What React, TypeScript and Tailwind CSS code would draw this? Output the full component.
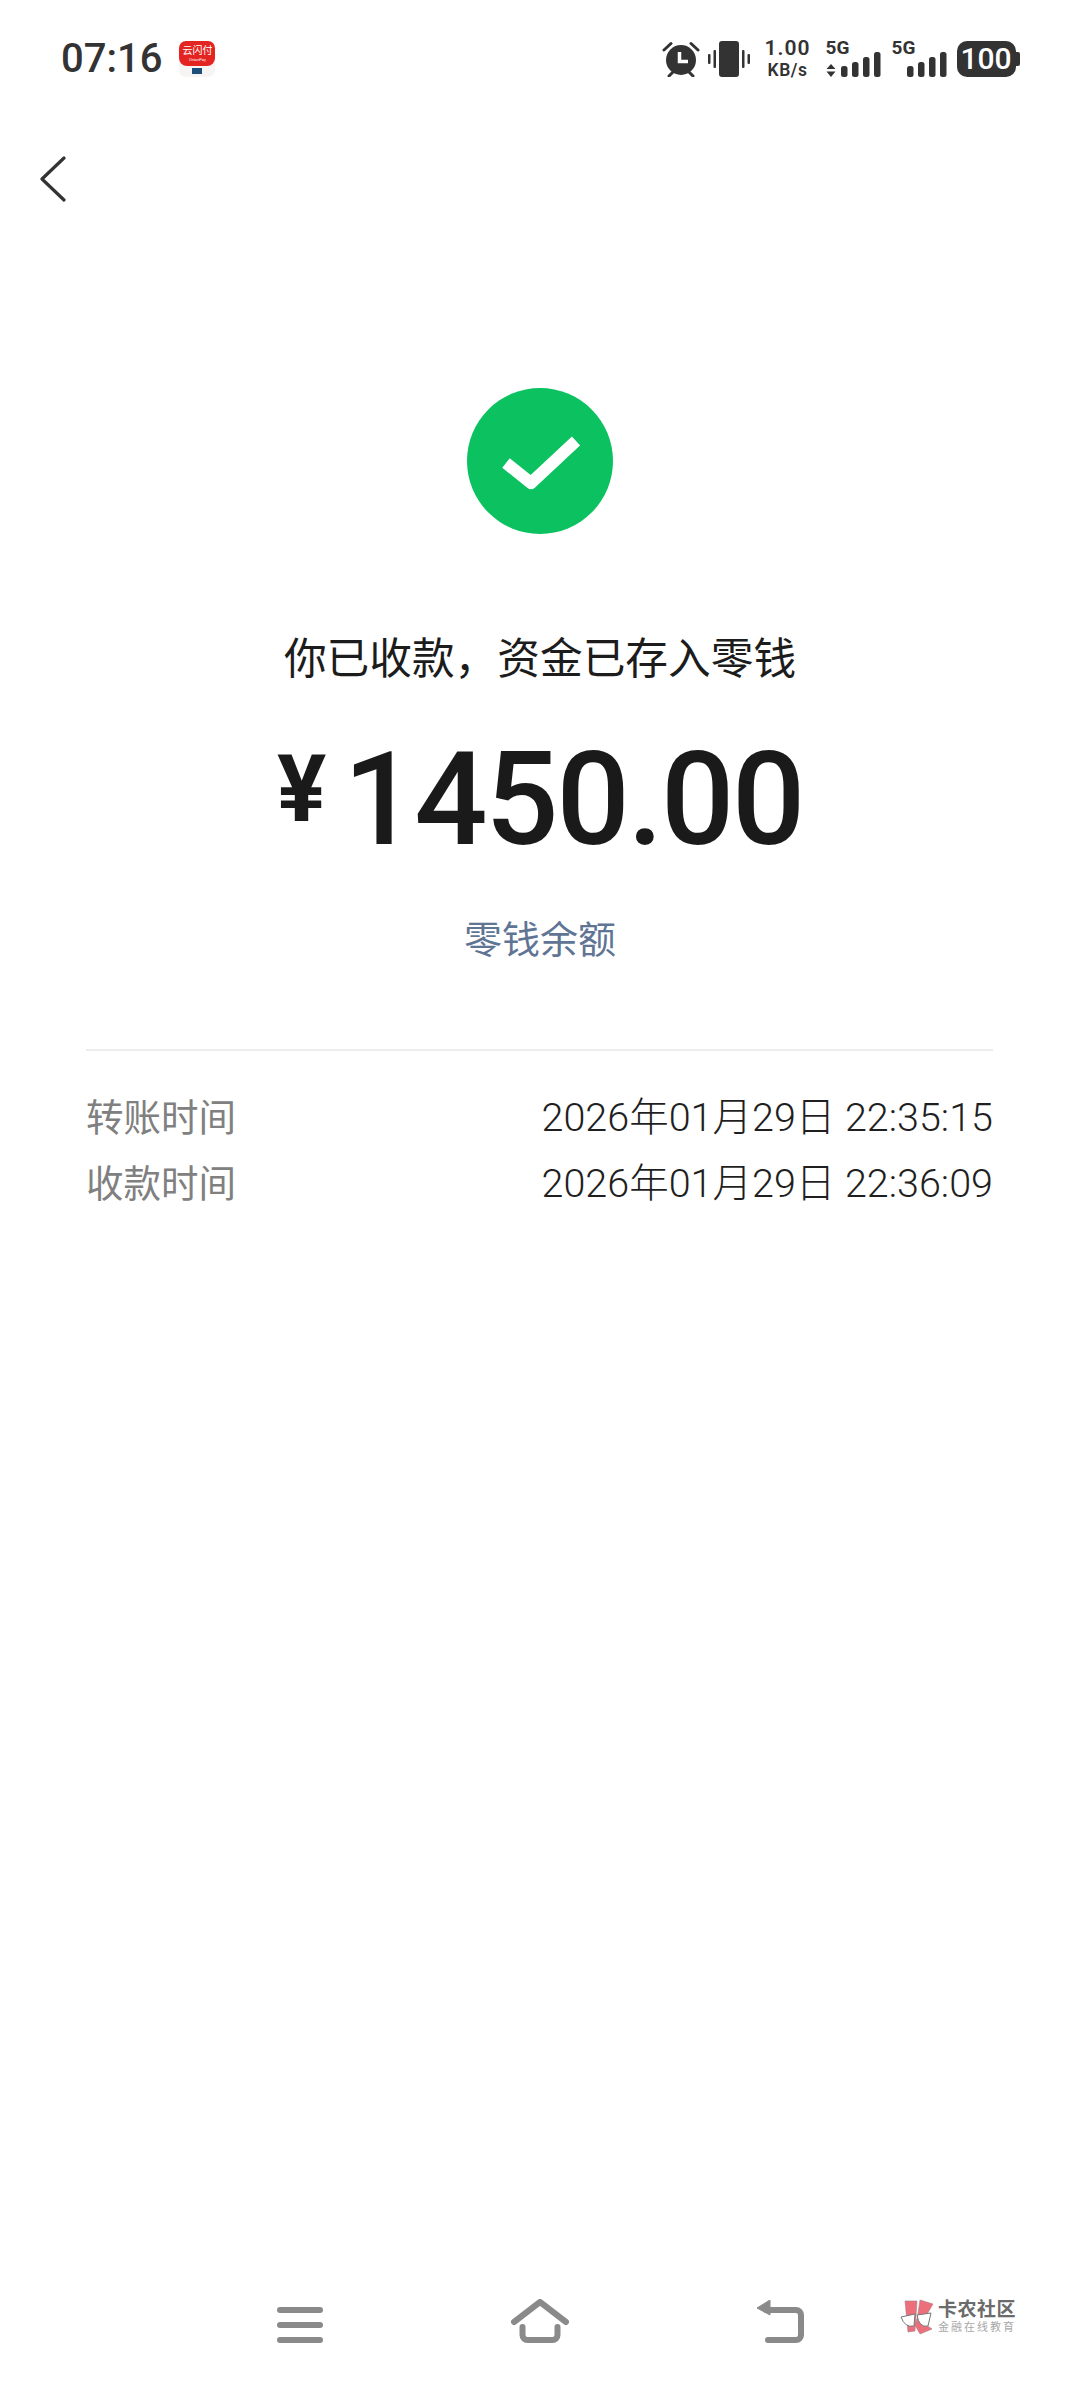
import React from 'react';

const CJK = "font-['Roboto','Noto_Sans_CJK_SC',sans-serif]";

const AlarmIcon = () => (
  <svg width="38" height="36" viewBox="0 0 38 36" fill="none">
    <circle cx="19" cy="19" r="15" fill="#333" />
    <path d="M2 9 9 2.5M36 9 29 2.5M7 35l4-4M31 35l-4-4" stroke="#333" strokeWidth="3" strokeLinecap="round" />
    <path d="M17.5 11v9.5H26" stroke="#fff" strokeWidth="3.5" />
  </svg>
);

const VibrateIcon = () => (
  <svg width="42" height="36" viewBox="0 0 42 36" fill="#333">
    <rect x="11" y="0" width="20" height="36" rx="3" />
    <rect x="0" y="13" width="2.5" height="10" rx="1" />
    <rect x="5.5" y="9" width="2.5" height="18" rx="1" />
    <rect x="34" y="9" width="2.5" height="18" rx="1" />
    <rect x="39.5" y="13" width="2.5" height="10" rx="1" />
  </svg>
);

// four signal bars, optionally with the up/down data arrows on the left
const SignalIcon = ({ arrows }: { arrows?: boolean }) => (
  <div className="flex flex-col w-[55px] h-[36px] relative">
    <span className="font-['Roboto',sans-serif] font-bold text-[19px] leading-[14px] text-[#333]">5G</span>
    <svg width="55" height="25" viewBox="0 0 55 25" fill="#333" className="absolute left-0 bottom-0">
      {arrows && <path d="M5 12 9.5 17H.5ZM5 25 .5 19.5h9Z" />}
      <rect x="15" y="14" width="6.5" height="11" rx="2.5" />
      <rect x="26" y="10" width="6.5" height="15" rx="2.5" />
      <rect x="37" y="5" width="6.5" height="20" rx="2.5" />
      <rect x="48" y="0" width="6.5" height="25" rx="2.5" />
    </svg>
  </div>
);

const StatusBar = () => (
  <div className="h-[118px] pl-[61px] pr-[60px] flex items-center justify-between">
    <div className="flex items-center gap-[17px]">
      <span className="font-['Roboto',sans-serif] font-medium text-[40px] leading-none text-[#333]">07:16</span>
      <div className="w-[36px] h-[36px] rounded-[7px] overflow-hidden flex flex-col bg-[#f7f4f4]">
        <div className="h-[25px] bg-[#e32420] rounded-b-[8px] flex flex-col items-center text-white leading-none">
          <span className={`${CJK} text-[10px] mt-[5px] leading-[10px]`}>云闪付</span>
          <span className="font-['Roboto',sans-serif] text-[4px] mt-[1px] leading-[5px]">UnionPay</span>
        </div>
        <div className="w-[10px] h-[6px] mx-auto mt-[2px] bg-[#1d4f7c]" />
      </div>
    </div>
    <div className="flex items-center">
      <AlarmIcon />
      <div className="ml-[8px]"><VibrateIcon /></div>
      <div className="ml-[14px] w-[48px] h-[36px] flex flex-col items-center justify-center font-['Roboto',sans-serif] text-[#333] font-semibold">
        <span className="text-[21px] leading-[22.5px] tracking-[1px] shrink-0">1.00</span>
        <span className="text-[17.5px] leading-[22.5px] tracking-[0.5px] shrink-0">KB/s</span>
      </div>
      <div className="ml-[14px]"><SignalIcon arrows /></div>
      <div className="ml-[11px]"><SignalIcon /></div>
      <div className="ml-[10px] flex items-center">
        <div className="w-[59px] h-[36px] rounded-[10px] bg-[#333] text-white flex items-center justify-center font-['Roboto',sans-serif] font-medium text-[30px] leading-none">100</div>
        <div className="w-[4px] h-[14px] ml-[0.5px] rounded-r-[2px] bg-[#333]" />
      </div>
    </div>
  </div>
);

const DetailRow = ({ label, value }: { label: string; value: string }) => (
  <div className={`${CJK} flex justify-between leading-[66px]`}>
    <span className="text-[#808080] font-normal text-[37.5px]">{label}</span>
    <span className="text-[#1f1f1f] font-light text-[39.5px]">{value}</span>
  </div>
);

const NavBar = () => (
  <div className="mt-auto pb-[45px] relative">
    <div className="w-[720px] ml-[180px] grid grid-cols-3 items-end justify-items-center">
      <svg width="46" height="36" viewBox="0 0 46 36" fill="#8a8a8a">
        <rect x="0" y="0" width="46" height="6" rx="3" />
        <rect x="0" y="15" width="46" height="6" rx="3" />
        <rect x="0" y="30" width="46" height="6" rx="3" />
      </svg>
      <svg width="58" height="44" viewBox="0 0 58 44" fill="none" stroke="#8a8a8a" strokeWidth="6" strokeLinecap="round" strokeLinejoin="round">
        <path d="M3 23 29 3l26 20" />
        <path d="M11.5 28v8a5 5 0 0 0 5 5h25a5 5 0 0 0 5-5v-8" />
      </svg>
      <svg width="48" height="43" viewBox="0 0 48 43" fill="none">
        <path d="M14 0v15L1 8Z" fill="#8a8a8a" stroke="#8a8a8a" strokeWidth="1" strokeLinejoin="round" />
        <path d="M10 10h30a5 5 0 0 1 5 5v20a5 5 0 0 1-5 5H12" stroke="#8a8a8a" strokeWidth="6" strokeLinecap="round" />
      </svg>
    </div>
    {/* community watermark sits above the nav icons */}
    <div className="absolute left-[900px] top-[0px] flex items-center gap-[2px]">
      <svg width="36" height="36" viewBox="0 0 36 36">
        <path d="M5 2h12l-2 30-7 1Z" fill="#ee6f7c" stroke="#a08085" strokeWidth="0.6" />
        <path d="M20 1l13 4-10 17-6-1Z" fill="#ee6f7c" stroke="#a08085" strokeWidth="0.6" />
        <path d="M17 20l15 10-12 5-5-9Z" fill="#ee6f7c" stroke="#a08085" strokeWidth="0.6" />
        <path d="M1 18 15 15 14 27Q5 29 1 18ZM17 16 31 14 28 27Q19 29 17 16Z" fill="#fff" stroke="#777" strokeWidth="1" />
      </svg>
      <div className={`${CJK} flex flex-col`}>
        <span className="text-[19px] leading-[20px] font-bold text-[#6b6b6b] tracking-[0.5px]">卡农社区</span>
        <span className="text-[11px] leading-[15px] text-[#a8a8a8] tracking-[2px]">金融在线教育</span>
      </div>
    </div>
  </div>
);

export default function App() {
  return (
    <div className="w-[1080px] h-[2388px] bg-white flex flex-col overflow-hidden">
      <StatusBar />
      <div className="pl-[40px] mt-[38px]">
        <svg width="26" height="46" viewBox="0 0 26 46" fill="none" stroke="#333" strokeWidth="3.2" strokeLinecap="round" strokeLinejoin="round">
          <path d="M24 2 2 23l22 21" />
        </svg>
      </div>

      <div className="flex flex-col items-center mt-[186px]">
        <div className="w-[146px] h-[146px] rounded-full bg-[#0bc160] flex items-center justify-center">
          <svg width="78" height="56" viewBox="0 0 78 56" fill="none" stroke="#fff" strokeWidth="12" strokeLinejoin="round" className="mt-[5px] ml-[1px]">
            <path d="M4 27 29 47 74 5" />
          </svg>
        </div>
        <div className={`${CJK} mt-[95px] text-[42.7px] leading-[60px] text-[#1c1c1c]`}>你已收款，资金已存入零钱</div>
        <div className="mt-[46px] h-[130px] flex items-start font-['Roboto',sans-serif] text-[#1a1a1a]">
          <span className="font-bold text-[92px] leading-[110px] mr-[17px]">¥</span>
          <span className="font-medium text-[129px] leading-[130px] tracking-[-2.3px]">1450.00</span>
        </div>
        <div className={`${CJK} mt-[50px] text-[38px] leading-[50px] text-[#607494]`}>零钱余额</div>
      </div>

      <div className="ml-[86px] mr-[87px] mt-[84px] pt-[34px] border-t-2 border-[#ececec] flex flex-col">
        <DetailRow label="转账时间" value="2026年01月29日 22:35:15" />
        <DetailRow label="收款时间" value="2026年01月29日 22:36:09" />
      </div>

      <NavBar />
    </div>
  );
}
